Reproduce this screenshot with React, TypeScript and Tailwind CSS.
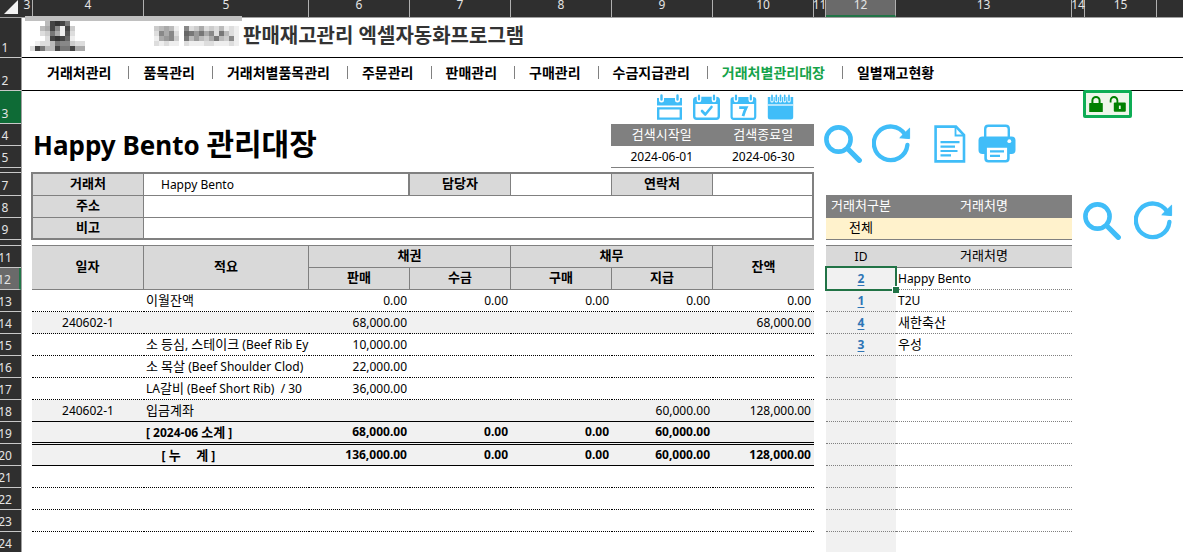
import { Fragment, type ReactNode } from "react";

const SKY = "#40bdf8";

const columns: { label: string; width: string; active?: boolean }[] = [
  { label: "3", width: "w-[11px]" },
  { label: "4", width: "w-[111px]" },
  { label: "5", width: "w-[165px]" },
  { label: "6", width: "w-[101px]" },
  { label: "7", width: "w-[101px]" },
  { label: "8", width: "w-[101px]" },
  { label: "9", width: "w-[101px]" },
  { label: "10", width: "w-[101px]" },
  { label: "11", width: "w-[12px]" },
  { label: "12", width: "w-[70px]", active: true },
  { label: "13", width: "w-[176px]" },
  { label: "14", width: "w-[13px]" },
  { label: "15", width: "w-[72px]" },
];

const rowHeads: { label: string; height: string }[] = [
  { label: "1", height: "h-[40px]" },
  { label: "2", height: "h-[33px]" },
  { label: "3", height: "h-[33px]" },
  { label: "4", height: "h-[22px]" },
  { label: "5", height: "h-[22px]" },
  { label: "", height: "h-[5px]" },
  { label: "7", height: "h-[23px]" },
  { label: "8", height: "h-[22px]" },
  { label: "9", height: "h-[22px]" },
  { label: "", height: "h-[6px]" },
  ...Array.from({ length: 14 }, (_, i) => ({ label: String(11 + i), height: "h-[22px]" })),
];

const menu = [
  "거래처관리",
  "품목관리",
  "거래처별품목관리",
  "주문관리",
  "판매관리",
  "구매관리",
  "수금지급관리",
  "거래처별관리대장",
  "일별재고현황",
];

type Entry = {
  date?: string;
  memo?: string;
  amounts: string[];
  kind?: "voucher" | "last" | "subtotal" | "total";
};

const none = ["", "", "", "", ""];

const entries: Entry[] = [
  { memo: "이월잔액", amounts: ["0.00", "0.00", "0.00", "0.00", "0.00"] },
  { date: "240602-1", amounts: ["68,000.00", "", "", "", "68,000.00"], kind: "voucher" },
  { memo: "소 등심, 스테이크 (Beef Rib Ey", amounts: ["10,000.00", "", "", "", ""] },
  { memo: "소 목살 (Beef Shoulder Clod)", amounts: ["22,000.00", "", "", "", ""] },
  { memo: "LA갈비 (Beef Short Rib)  / 30", amounts: ["36,000.00", "", "", "", ""] },
  { date: "240602-1", memo: "입금계좌", amounts: ["", "", "", "60,000.00", "128,000.00"], kind: "last" },
  { memo: "[ 2024-06 소계 ]", amounts: ["68,000.00", "0.00", "0.00", "60,000.00", ""], kind: "subtotal" },
  { memo: "     [ 누     계 ]", amounts: ["136,000.00", "0.00", "0.00", "60,000.00", "128,000.00"], kind: "total" },
  { amounts: none },
  { amounts: none },
  { amounts: none },
];

const rowStyle = {
  plain: "h-[22px] border-b border-dotted border-black",
  voucher: "h-[22px] border-b border-dotted border-black bg-[#f1f1f1]",
  last: "h-[22px] border-b border-solid border-black bg-[#f1f1f1]",
  subtotal: "h-[23px] border-b-3 border-double border-black bg-[#f1f1f1] font-bold",
  total: "h-[21px] border-b border-solid border-black bg-[#f1f1f1] font-bold",
};

const clients = [
  { id: "2", name: "Happy Bento", selected: true },
  { id: "1", name: "T2U" },
  { id: "4", name: "새한축산" },
  { id: "3", name: "우성" },
  ...Array.from({ length: 9 }, () => ({ id: "", name: "" })),
];

/** Sets Hangul runs one step larger than the Latin text beside them. */
function Mixed({ text }: { text: string }) {
  return (
    <>
      {text.split(/([가-힣]+)/).map((part, i) =>
        i % 2 ? (
          <span key={i} className="text-[13px]">
            {part}
          </span>
        ) : (
          part
        ),
      )}
    </>
  );
}

function Pixels({ rows, className, label }: { rows: string[]; className: string; label: string }) {
  const cols = rows[0].length;
  return (
    <svg
      className={className}
      viewBox={`0 0 ${cols * 5} ${rows.length * 5}`}
      shapeRendering="crispEdges"
      role="img"
      aria-label={label}
    >
      {rows.map((row, y) =>
        row.split("").map((c, x) =>
          c === "." ? null : (
            <rect key={`${x}-${y}`} x={x * 5} y={y * 5} width="5" height="5" fill={`#${c}${c}${c}`} />
          ),
        ),
      )}
    </svg>
  );
}

function SearchIcon() {
  return (
    <svg className="size-[38px]" viewBox="0 0 38 38" fill="none" stroke={SKY} strokeLinecap="round">
      <circle cx="14.5" cy="14.5" r="12.1" strokeWidth="4.6" />
      <path d="M24 24 L35.3 35.3" strokeWidth="5.2" />
    </svg>
  );
}

function RefreshIcon() {
  return (
    <svg className="size-[39px]" viewBox="0 0 39 39" fill="none">
      <path
        d="M33 10.5 A16.8 16.8 0 1 0 35.4 21"
        stroke={SKY}
        strokeWidth="4.3"
        strokeLinecap="round"
      />
      <path d="M37.6 4.2 V14.6 L27.8 13.8 Z" fill={SKY} stroke={SKY} strokeWidth="1" strokeLinejoin="round" />
    </svg>
  );
}

function DocumentIcon() {
  return (
    <svg className="h-[38px] w-[32px]" viewBox="0 0 32 38" fill="none" stroke={SKY} strokeWidth="2.6">
      <path d="M1.6 1.6 H22 L30 10 V36.4 H1.6 Z" />
      <path d="M21.5 2 V10.5 H30" strokeWidth="1.8" />
      <path d="M6.5 17.2 H25.5 M6.5 21.6 H21 M6.5 26 H23.5 M6.5 30.4 H17" strokeWidth="2.2" />
    </svg>
  );
}

function PrinterIcon() {
  return (
    <svg className="h-[39px] w-[38px]" viewBox="0 0 38 39">
      <path d="M7.2 14 V5 Q7.2 1.8 10.4 1.8 H27.6 Q30.8 1.8 30.8 5 V14" fill="#fff" stroke={SKY} strokeWidth="2.4" />
      <rect x="0.5" y="12.5" width="37" height="17.5" rx="4" fill={SKY} />
      <circle cx="31.3" cy="17.2" r="1.9" fill="#fff" />
      <path d="M7.6 22.5 H30.4 V34.5 Q30.4 37.2 27.6 37.2 H10.4 Q7.6 37.2 7.6 34.5 Z" fill="#fff" stroke={SKY} strokeWidth="2.6" />
      <path d="M12 27.4 H26 M12 31.8 H22" stroke={SKY} strokeWidth="2.2" />
    </svg>
  );
}

function Calendar({ children }: { children: ReactNode }) {
  return (
    <svg className="h-[26px] w-[27px]" viewBox="0 0 27 26" fill="none">
      {children}
    </svg>
  );
}

const calendars: { label: string; art: ReactNode }[] = [
  {
    label: "이번 달",
    art: (
      <>
        <path d="M1 4 H26 V11.5 H1 Z" fill={SKY} />
        <path d="M2.2 14.4 H24.8 V24.6 H2.2 Z" stroke={SKY} strokeWidth="2.4" />
        <path d="M5.5 2 V6 M21.5 2 V6" stroke="#fff" strokeWidth="5" strokeLinecap="round" />
        <path d="M5.5 1.5 V5.5 M21.5 1.5 V5.5" stroke={SKY} strokeWidth="2.4" strokeLinecap="round" />
      </>
    ),
  },
  {
    label: "오늘",
    art: (
      <>
        <rect x="1.2" y="4" width="24.6" height="20.8" rx="2.5" stroke={SKY} strokeWidth="2.4" />
        <path d="M1.2 4 H25.8 V10 H1.2 Z" fill={SKY} />
        <path d="M6 2 V6 M21 2 V6" stroke="#fff" strokeWidth="4.6" strokeLinecap="round" />
        <path d="M6 1.5 V5.5 M21 1.5 V5.5" stroke={SKY} strokeWidth="2.2" strokeLinecap="round" />
        <path d="M9 17 L12.3 20.5 L18.5 13" stroke={SKY} strokeWidth="2.6" strokeLinecap="round" strokeLinejoin="round" />
      </>
    ),
  },
  {
    label: "최근 7일",
    art: (
      <>
        <rect x="1.6" y="4" width="23.6" height="20.8" rx="2" stroke={SKY} strokeWidth="2.2" />
        <path d="M1.4 4 H25.4 V10 H1.4 Z" fill={SKY} />
        <path d="M6 2 V6 M20.8 2 V6" stroke="#fff" strokeWidth="4.6" strokeLinecap="round" />
        <path d="M6 1.5 V5.5 M20.8 1.5 V5.5" stroke={SKY} strokeWidth="2.2" strokeLinecap="round" />
        <path d="M9.2 13.6 H16.2 Q14.5 17 13 22.2" stroke={SKY} strokeWidth="2.8" />
      </>
    ),
  },
  {
    label: "전체 기간",
    art: (
      <>
        <path d="M0.8 3 H26.2 V23 Q26.2 25.5 23.7 25.5 H3.3 Q0.8 25.5 0.8 23 Z" fill={SKY} />
        <path d="M1 11 H26" stroke="#fff" strokeWidth="1.2" />
        <path d="M5 2 V7 M9.3 2 V7 M13.5 2 V7 M17.7 2 V7 M22 2 V7" stroke="#fff" strokeWidth="3.2" strokeLinecap="round" />
        <path d="M5 1.4 V6.6 M9.3 1.4 V6.6 M13.5 1.4 V6.6 M17.7 1.4 V6.6 M22 1.4 V6.6" stroke={SKY} strokeWidth="1.7" strokeLinecap="round" />
      </>
    ),
  },
];

function LockIcon() {
  return (
    <svg className="h-[16px] w-[14px]" viewBox="0 0 14 16" fill="none">
      <path d="M3.4 8 V4.6 A3.6 3.6 0 0 1 10.6 4.6 V8" stroke="#008000" strokeWidth="2" />
      <rect x="0.2" y="7" width="13.6" height="9" rx="0.6" fill="#008000" />
    </svg>
  );
}

function UnlockIcon() {
  return (
    <svg className="h-[16px] w-[17px]" viewBox="0 0 17 16" fill="none">
      <path d="M1.6 6.5 V4.4 A3.4 3.4 0 0 1 8.4 4.4 V7.5" stroke="#008000" strokeWidth="1.8" />
      <rect x="4.8" y="6.6" width="12" height="9.2" rx="1" fill="#008000" />
      <path d="M10.8 9.6 V13" stroke="#eef6ea" strokeWidth="1.8" />
    </svg>
  );
}

const labelCell = "bg-[#d9d9d9] px-0 pt-0 pb-[3px] text-center text-[13px] font-bold";
const gray = "border-[#808080]";

export default function App() {
  return (
    <div className="flex h-screen flex-col overflow-hidden bg-white font-['Noto_Sans','Noto_Sans_CJK_KR',sans-serif] text-[12px] leading-[16px] text-black">
      <div className="flex h-[18px] shrink-0 border-b border-[#a0a0a0] bg-[#2f2f2f] text-[12px] text-[#e4e4e4]">
        <div className="flex w-[22px] shrink-0 items-end justify-end pr-[4px] pb-[3px]">
          <svg className="size-[14px]" viewBox="0 0 14 14" aria-hidden="true">
            <path d="M14 0 V14 H0 Z" fill="#f2f2f2" />
          </svg>
        </div>
        {columns.map((c) => (
          <div
            key={c.label}
            className={`${c.width} flex h-[17px] shrink-0 justify-center border-r border-[#b0b0b0] leading-[10px] ${
              c.active ? "border-b-2 border-b-[#217346] bg-[#6a6a6a]" : ""
            }`}
          >
            {c.label}
          </div>
        ))}
      </div>

      <div className="flex min-h-0 flex-1">
        <div className="w-[22px] shrink-0 border-r border-[#a0a0a0] bg-[#2f2f2f] text-[#e4e4e4]">
          {rowHeads.map((r, i) => (
            <div
              key={i}
              className={`${r.height} flex items-end justify-center border-b border-[#c8c8c8] pr-[11px] ${
                r.label === "3" ? "bg-[#0e6b36]" : r.label === "12" ? "border-r-2 border-r-[#217346] bg-[#6a6a6a]" : ""
              } ${r.label ? "pb-px" : ""}`}
            >
              {r.label}
            </div>
          ))}
        </div>

        <main className="min-w-0 flex-1">
          <header className="relative flex h-[40px] border-b border-black">
            <div className="absolute -top-[2px] left-[3px] h-[5px] w-[217px] bg-[#c0c0c0]" />
            <Pixels
              className="mt-[3px] ml-[8px] h-[30px] w-[55px] shrink-0"
              label="회사 로고"
              rows={["...b4347...", "..ba48e4c..", "..dc7ae5d..", "...d4346e..", ".eddb788cdd", "d47bb4774aa"]}
            />
            <Pixels
              className="mt-[8px] ml-[69px] h-[20px] w-[85px] shrink-0"
              label="회사명"
              rows={["cbabe.8dcadcdbede", "d8a8d.6797a8d7bde", "ea98c.7b9bca7bc8e", "dedee.deeeddeeede"]}
            />
            <h1 className="ml-[4px] pt-[6px] text-[20px] leading-[24px] font-bold whitespace-nowrap text-[#333]">
              판매재고관리 엑셀자동화프로그램
            </h1>
          </header>

          <nav className="flex h-[33px] items-center border-b border-black pb-[3px] pl-[25px] text-[14px] font-bold whitespace-nowrap">
            {menu.map((m, i) => (
              <Fragment key={m}>
                {i > 0 && <span className="mr-[14px] ml-[17px] h-[13px] w-px bg-[#808080]" />}
                <a href="#" className={m === "거래처별관리대장" ? "text-[#16a34a]" : ""}>
                  {m}
                </a>
              </Fragment>
            ))}
          </nav>

          <div className="flex">
            <section className="ml-[9px] w-[783px] shrink-0">
              <div className="flex h-[33px] items-end justify-end gap-[10px] pr-[20px] pb-[4px]">
                {calendars.map((c) => (
                  <button key={c.label} type="button" aria-label={c.label}>
                    <Calendar>{c.art}</Calendar>
                  </button>
                ))}
              </div>

              <div className="flex h-[44px] items-center justify-between">
                <h2 className="pb-[3px] pl-[2px] text-[26px] leading-[40px] font-bold whitespace-nowrap">
                  Happy Bento <span className="text-[30px]">관리대장</span>
                </h2>
                <table className="h-[44px] w-[203px] table-fixed border-separate border-spacing-0 text-center">
                  <thead>
                    <tr className="bg-[#808080] text-[13px] text-white">
                      <th className="h-[22px] p-0 pb-[3px] font-normal">검색시작일</th>
                      <th className="h-[22px] p-0 pb-[3px] font-normal">검색종료일</th>
                    </tr>
                  </thead>
                  <tbody>
                    <tr>
                      <td className={`h-[22px] border-b p-0 ${gray}`}>2024-06-01</td>
                      <td className={`h-[22px] border-b p-0 ${gray}`}>2024-06-30</td>
                    </tr>
                  </tbody>
                </table>
              </div>

              <table className={`mt-[4px] h-[68px] w-full table-fixed border-separate border-spacing-0 border-2 ${gray}`}>
                <colgroup>
                  <col className="w-[111px]" />
                  <col />
                  <col className="w-[101px]" />
                  <col className="w-[101px]" />
                  <col className="w-[101px]" />
                  <col className="w-[99px]" />
                </colgroup>
                <tbody>
                  <tr>
                    <th className={`${labelCell} h-[22px] border-r border-b ${gray}`}>거래처</th>
                    <td className={`border-r-2 border-b p-0 pl-[17px] ${gray}`}>Happy Bento</td>
                    <th className={`${labelCell} border-r border-b ${gray}`}>담당자</th>
                    <td className={`border-r border-b p-0 ${gray}`} />
                    <th className={`${labelCell} border-r border-b ${gray}`}>연락처</th>
                    <td className={`border-b p-0 ${gray}`} />
                  </tr>
                  <tr>
                    <th className={`${labelCell} h-[22px] border-r border-b ${gray}`}>주소</th>
                    <td colSpan={5} className={`border-b p-0 ${gray}`} />
                  </tr>
                  <tr>
                    <th className={`${labelCell} h-[20px] border-r ${gray}`}>비고</th>
                    <td colSpan={5} className="p-0" />
                  </tr>
                </tbody>
              </table>

              <table className="mt-[5px] ml-px w-[782px] table-fixed border-separate border-spacing-0">
                <colgroup>
                  <col className="w-[112px]" />
                  <col className="w-[165px]" />
                  <col className="w-[101px]" />
                  <col className="w-[101px]" />
                  <col className="w-[101px]" />
                  <col className="w-[101px]" />
                  <col />
                </colgroup>
                <thead>
                  <tr className="h-[23px]">
                    <th rowSpan={2} className={`${labelCell} border-t border-r border-b ${gray}`}>일자</th>
                    <th rowSpan={2} className={`${labelCell} border-t border-r border-b ${gray}`}>적요</th>
                    <th colSpan={2} className={`${labelCell} h-[23px] border-t border-r border-b ${gray}`}>채권</th>
                    <th colSpan={2} className={`${labelCell} border-t border-r border-b ${gray}`}>채무</th>
                    <th rowSpan={2} className={`${labelCell} border-t border-b ${gray}`}>잔액</th>
                  </tr>
                  <tr className="h-[22px]">
                    {["판매", "수금", "구매", "지급"].map((t) => (
                      <th key={t} className={`${labelCell} h-[22px] border-r border-b ${gray}`}>{t}</th>
                    ))}
                  </tr>
                </thead>
                <tbody>
                  {entries.map((e, i) => {
                    const cell = rowStyle[e.kind ?? "plain"];
                    return (
                      <tr key={i}>
                        <td className={`${cell} p-0 text-center`}>{e.date}</td>
                        <td className={`${cell} p-0 pl-[2px] whitespace-pre`}>
                          {e.memo && <Mixed text={e.memo} />}
                        </td>
                        {e.amounts.map((a, j) => (
                          <td key={j} className={`${cell} p-0 pr-[3px] text-right`}>{a}</td>
                        ))}
                      </tr>
                    );
                  })}
                </tbody>
              </table>
            </section>

            <section className="min-w-0 flex-1 pl-[10px]">
              <div className="flex h-[104px] items-start">
                <div className="flex w-[259px] items-center pt-[33px]">
                  <button type="button" aria-label="조회"><SearchIcon /></button>
                  <button type="button" aria-label="새로고침" className="ml-[10px]"><RefreshIcon /></button>
                  <button type="button" aria-label="문서" className="ml-[23px]"><DocumentIcon /></button>
                  <button type="button" aria-label="인쇄" className="ml-[12px]"><PrinterIcon /></button>
                </div>
                <div className="-mt-px flex h-[28px] items-center gap-[6px] rounded-[2px] border-3 border-[#0ead55] bg-[#eef6ea] px-[3px]">
                  <button type="button" aria-label="잠금"><LockIcon /></button>
                  <button type="button" aria-label="잠금 해제"><UnlockIcon /></button>
                </div>
              </div>

              <div className="flex h-[50px] items-start pl-[2px]">
                <table className="w-[246px] shrink-0 table-fixed border-separate border-spacing-0 text-center text-[13px]">
                  <colgroup>
                    <col className="w-[70px]" />
                    <col />
                  </colgroup>
                  <thead>
                    <tr className="bg-[#808080] text-white">
                      <th className="h-[23px] p-0 pb-[3px] font-normal whitespace-nowrap">거래처구분</th>
                      <th className="h-[23px] p-0 pb-[3px] font-normal">거래처명</th>
                    </tr>
                  </thead>
                  <tbody>
                    <tr className="bg-[#fff2cc]">
                      <td className={`h-[22px] border-b p-0 pb-[3px] ${gray}`}>전체</td>
                      <td className={`h-[22px] border-b p-0 ${gray}`} />
                    </tr>
                  </tbody>
                </table>
                <div className="flex gap-[13px] pt-[6px] pl-[11px]">
                  <button type="button" aria-label="거래처 조회"><SearchIcon /></button>
                  <button type="button" aria-label="거래처 새로고침"><RefreshIcon /></button>
                </div>
              </div>

              <table className="ml-[2px] w-[246px] table-fixed border-separate border-spacing-0">
                <colgroup>
                  <col className="w-[70px]" />
                  <col />
                </colgroup>
                <thead>
                  <tr className="bg-[#d9d9d9]">
                    <th className={`h-[23px] border-t border-b p-0 font-normal ${gray}`}>ID</th>
                    <th className={`h-[23px] border-t border-b p-0 pb-[3px] text-[13px] font-normal ${gray}`}>거래처명</th>
                  </tr>
                </thead>
                <tbody>
                  {clients.map((c, i) => (
                    <tr key={i}>
                      <td
                        className={`relative h-[22px] border-b border-dotted bg-[#f1f1f1] p-0 text-center ${gray} ${
                          "selected" in c ? "z-10" : ""
                        }`}
                      >
                        {c.id && (
                          <a href="#" className="font-bold text-[#2e75b6] underline underline-offset-2">{c.id}</a>
                        )}
                        {"selected" in c && (
                          <span className="pointer-events-none absolute -inset-x-px -top-[2px] -bottom-[2px] border-2 border-[#217346]">
                            <span className="absolute -right-[4px] -bottom-[4px] size-[7px] border-t border-l border-white bg-[#217346]" />
                          </span>
                        )}
                      </td>
                      <td className={`h-[22px] border-b border-dotted p-0 pl-[2px] ${gray}`}>
                        <Mixed text={c.name} />
                      </td>
                    </tr>
                  ))}
                </tbody>
              </table>
            </section>
          </div>
        </main>
      </div>
    </div>
  );
}
